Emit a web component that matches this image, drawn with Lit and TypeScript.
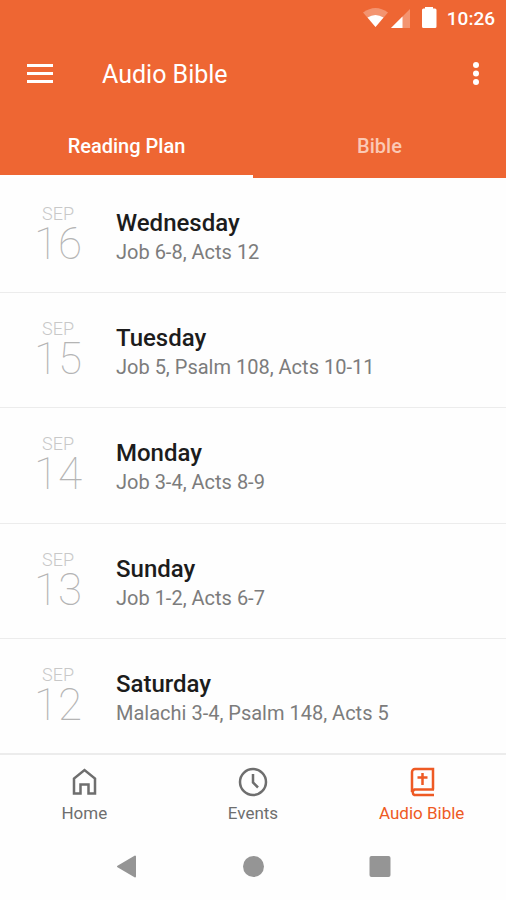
import { LitElement, html, css, svg } from "lit";
import { customElement, property, state } from "lit/decorators.js";
import { classMap } from "lit/directives/class-map.js";

interface Reading {
  month: string;
  date: number;
  day: string;
  passages: string;
}

const readings: Reading[] = [
  { month: "SEP", date: 16, day: "Wednesday", passages: "Job 6-8, Acts 12" },
  { month: "SEP", date: 15, day: "Tuesday", passages: "Job 5, Psalm 108, Acts 10-11" },
  { month: "SEP", date: 14, day: "Monday", passages: "Job 3-4, Acts 8-9" },
  { month: "SEP", date: 13, day: "Sunday", passages: "Job 1-2, Acts 6-7" },
  { month: "SEP", date: 12, day: "Saturday", passages: "Malachi 3-4, Psalm 148, Acts 5" },
];

const homeIcon = svg`<path d="M5 26.500V11.500L15.500 3L26 11.500V26.500H19.500V17.500H11.500V26.500Z" />`;
const clockIcon = svg`<circle cx="15" cy="15" r="13" /><path d="M15 7V15.500L20 20.500" />`;
const bibleIcon = svg`<path d="M27 22.500H7.500A3 3 0 0 0 7.500 28H27M5 25V5A3 3 0 0 1 8 2H26V22.500" />
  <path d="M15.500 6V18M10.500 10.500H20.500" />`;

const navItems = [
  { label: "Home", icon: homeIcon },
  { label: "Events", icon: clockIcon },
  { label: "Audio Bible", icon: bibleIcon },
];

@customElement("status-bar")
export class StatusBar extends LitElement {
  static styles = css`
    :host {
      display: flex;
      justify-content: flex-end;
      align-items: center;
      height: 36px;
      padding-right: 11px;
      color: #fff;
      font-size: 19px;
      font-weight: 500;
    }
    .icons {
      width: 76px;
      height: 24px;
      margin-right: 8px;
    }
  `;

  render() {
    return html`
      <svg class="icons" viewBox="0 0 76 24" fill="#fff" aria-hidden="true">
        <path d="M0 6.500Q12.500 -2.500 25 6.500L12.500 21Z" opacity="0.300" />
        <path d="M4.500 11.500Q12.500 6.500 20.500 11.500L12.500 21Z" />
        <path d="M47 3V22H28Z" opacity="0.300" />
        <path d="M39.500 10.500V22H28Z" />
        <path d="M62 2.500V1H70V2.500H72Q73.500 2.500 73.500 4V20.500Q73.500 22 72 22H60.500Q59 22 59 20.500V4Q59 2.500 60.500 2.500Z" />
      </svg>
      <span>10:26</span>
    `;
  }
}

@customElement("reading-row")
export class ReadingRow extends LitElement {
  @property({ attribute: false }) reading!: Reading;

  static styles = css`
    :host {
      display: flex;
      gap: 31px;
      padding: 26px 16px 24px 31px;
    }
    .date {
      width: 54px;
      text-align: center;
    }
    .month {
      display: block;
      font-size: 18px;
      line-height: 20px;
      font-weight: 300;
      color: #c8c8c8;
    }
    .number {
      display: block;
      font-size: 44px;
      line-height: 40px;
      font-weight: 100;
      color: #b4b4b4;
    }
    .title {
      margin: 4px 0 0;
      font-size: 24px;
      line-height: 30px;
      font-weight: 500;
      color: #1c1c1c;
    }
    .passages {
      margin: 0;
      font-size: 20px;
      line-height: 28px;
      color: #7c7c7c;
    }
  `;

  render() {
    const r = this.reading;
    return html`
      <div class="date">
        <span class="month">${r.month}</span>
        <span class="number">${r.date}</span>
      </div>
      <div>
        <h2 class="title">${r.day}</h2>
        <p class="passages">${r.passages}</p>
      </div>
    `;
  }
}

@customElement("app-root")
export class AppRoot extends LitElement {
  @state() private tab = "Reading Plan";
  @state() private page = "Audio Bible";

  static styles = css`
    :host {
      display: flex;
      flex-direction: column;
      min-height: 100vh;
      background: #fefefe;
      font-family: Roboto, "Liberation Sans", sans-serif;
    }
    button {
      padding: 0;
      border: 0;
      background: none;
      font: inherit;
      color: inherit;
      cursor: pointer;
    }
    svg {
      display: block;
    }
    header {
      background: #ee6633;
      color: #fff;
    }
    .toolbar {
      display: flex;
      align-items: center;
      height: 78px;
      padding: 0 20px 0 26px;
    }
    h1 {
      flex: 1;
      margin: 0 0 0 48px;
      font-size: 25px;
      line-height: 32px;
      font-weight: 400;
    }
    .tabs {
      display: grid;
      grid-template-columns: 1fr 1fr;
    }
    .tab {
      height: 64px;
      padding-top: 2px;
      border-bottom: 3px solid transparent;
      font-size: 20px;
      font-weight: 500;
      color: #fbc9b5;
    }
    .tab.active {
      border-bottom-color: #fff;
      color: #fff;
    }
    main {
      flex: 1;
      display: flex;
      flex-direction: column;
    }
    reading-row {
      flex: 1;
    }
    reading-row + reading-row {
      border-top: 1px solid #ececec;
    }
    .nav {
      display: grid;
      grid-template-columns: repeat(3, 1fr);
      padding: 12px 0 15px;
      border-top: 2px solid #ececec;
    }
    .item {
      display: flex;
      flex-direction: column;
      align-items: center;
      gap: 6px;
      font-size: 17px;
      line-height: 20px;
      color: #6e6e6e;
    }
    .item.active {
      color: #ee5a24;
    }
    .system {
      display: grid;
      grid-template-columns: repeat(3, 1fr);
      padding: 16px 12.5% 22px;
    }
    .key {
      display: flex;
      justify-content: center;
    }
  `;

  render() {
    return html`
      <header>
        <status-bar></status-bar>
        <div class="toolbar">
          <button aria-label="Menu">
            <svg width="28" height="22" viewBox="0 0 28 22" fill="#fff">
              <path d="M1 0H27V3H1ZM1 8H27V11H1ZM1 16H27V19H1Z" />
            </svg>
          </button>
          <h1>Audio Bible</h1>
          <button aria-label="More options">
            <svg width="20" height="28" viewBox="0 0 20 28" fill="#fff">
              <circle cx="10" cy="4" r="3" />
              <circle cx="10" cy="12.500" r="3" />
              <circle cx="10" cy="21" r="3" />
            </svg>
          </button>
        </div>
        <div class="tabs" role="tablist">
          ${["Reading Plan", "Bible"].map(
            (name) => html`<button
              role="tab"
              aria-selected=${this.tab === name}
              class=${classMap({ tab: true, active: this.tab === name })}
              @click=${() => (this.tab = name)}
            >${name}</button>`
          )}
        </div>
      </header>
      <main>
        ${readings.map((r) => html`<reading-row .reading=${r}></reading-row>`)}
      </main>
      <nav class="nav">
        ${navItems.map(
          ({ label, icon }) => html`<button
            class=${classMap({ item: true, active: this.page === label })}
            @click=${() => (this.page = label)}
          >
            <svg width="30" height="30" viewBox="0 0 30 30" fill="none" stroke="currentColor" stroke-width="2.500">${icon}</svg>
            <span>${label}</span>
          </button>`
        )}
      </nav>
      <div class="system">
        <button class="key" aria-label="Back">
          <svg width="24" height="24" viewBox="0 0 24 24" fill="#959595" stroke="#959595" stroke-width="2" stroke-linejoin="round">
            <path d="M3 12.500L20 2.500V22.500Z" />
          </svg>
        </button>
        <button class="key" aria-label="Home screen">
          <svg width="24" height="24" viewBox="0 0 24 24" fill="#959595"><circle cx="12.500" cy="12.500" r="10.500" /></svg>
        </button>
        <button class="key" aria-label="Recent apps">
          <svg width="24" height="24" viewBox="0 0 24 24" fill="#959595"><rect x="1.500" y="2" width="21" height="21" rx="2" /></svg>
        </button>
      </div>
    `;
  }
}
